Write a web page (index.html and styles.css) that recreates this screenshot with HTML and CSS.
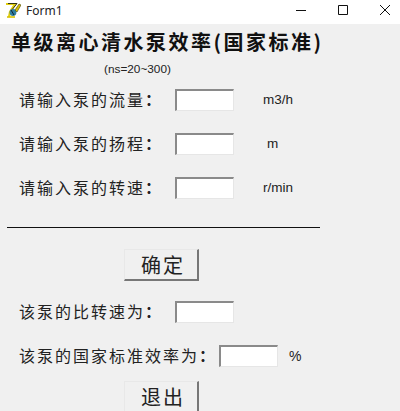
FILE: index.html
```html
<!DOCTYPE html>
<html lang="zh">
<head>
<meta charset="utf-8">
<title>Form1</title>
<link rel="stylesheet" href="styles.css">
</head>
<body>
<div class="window">
  <header class="titlebar">
    <svg class="app-icon" width="15" height="15" viewBox="0 0 15 15">
      <path d="M0 1h9L4 9 3 14" fill="none" stroke="#e3cf10" stroke-width="2.2"/>
      <path d="M2 .5h9L5 8" fill="none" stroke="#33330f" stroke-width="1"/>
      <path d="M1 14h8" stroke="#d9c200" stroke-width="1.6"/>
      <circle cx="7" cy="9.5" r="3.4" fill="#2f7f9f"/>
      <path d="M5 7l3 5" stroke="#123" stroke-width="1"/>
      <path d="M9 7l4-6 2 1-4 7z" fill="#d6c000" stroke="#44400a" stroke-width=".6"/>
    </svg>
    <span class="title-text">Form1</span>
    <div class="controls">
      <svg width="10" height="10" viewBox="0 0 10 10"><path d="M0 5.5h10" stroke="#111" stroke-width="1"/></svg>
      <svg width="10" height="10" viewBox="0 0 10 10"><path d="M.5.5h9v9h-9z" fill="none" stroke="#111" stroke-width="1"/></svg>
      <svg width="10" height="10" viewBox="0 0 10 10"><path d="M0 0l10 10M10 0L0 10" stroke="#111" stroke-width="1"/></svg>
    </div>
  </header>
  <main class="form">
    <h1 class="heading">单级离心清水泵效率(国家标准)</h1>
    <p class="note">(ns=20~300)</p>
    <div class="row row-first">
      <label class="label">请输入泵的流量<span class="colon">：</span></label><span class="field"></span><span class="unit">m3/h</span>
    </div>
    <div class="row">
      <label class="label">请输入泵的扬程<span class="colon">：</span></label><span class="field"></span><span class="unit unit-m">m</span>
    </div>
    <div class="row">
      <label class="label">请输入泵的转速<span class="colon">：</span></label><span class="field"></span><span class="unit">r/min</span>
    </div>
    <hr class="divider">
    <button class="btn btn-ok">确定</button>
    <div class="row row-result">
      <label class="label">该泵的比转速为<span class="colon">：</span></label><span class="field"></span>
    </div>
    <div class="row">
      <label class="label label-wide">该泵的国家标准效率为<span class="colon">：</span></label><span class="field"></span><span class="unit unit-pct">%</span>
    </div>
    <button class="btn btn-exit">退出</button>
  </main>
</div>
</body>
</html>
```
FILE: styles.css
```css
* { box-sizing: border-box; }
html, body { margin: 0; height: 100%; overflow: hidden; }
body { background: #f0f0f0; font-family: "Noto Sans CJK SC", "Liberation Sans", sans-serif; color: #111; }
.window { width: 400px; height: 411px; overflow: hidden; }
.titlebar { height: 24px; background: #fff; display: flex; align-items: center; padding: 0 0 4px 6px; }
.app-icon { flex: none; }
.title-text { font: 12px "Noto Sans", sans-serif; margin-left: 5px; color: #222; }
.controls { margin-left: auto; display: flex; gap: 32px; padding-right: 10px; align-items: center; }
.form { display: flow-root; padding-left: 7px; }
.heading { margin: 5px 0 0 4px; font-size: 20px; line-height: 26px; font-weight: 700; letter-spacing: 2.5px; white-space: nowrap; color: #111; }
.note { margin: 7px 0 0 97px; font: 11.8px/14px "Liberation Sans", sans-serif; color: #222; }
.row { display: flex; align-items: center; height: 22px; margin-top: 22px; padding-left: 12px; }
.row-first { margin-top: 13px; }
.row-result { margin-top: 20px; }
.label { width: 156px; flex: none; padding-bottom: 2px; font-size: 16px; line-height: 22px; letter-spacing: 2px; white-space: nowrap; color: #222; }
.label-wide { width: 200px; }
.colon { font-family: "Noto Sans CJK TC", sans-serif; font-weight: 700; }
.field { flex: none; width: 59px; height: 22px; background: #fff; border: 1px solid #e6e6e6; border-top: 2px solid #8a8a8a; border-left: 2px solid #8a8a8a; }
.unit { margin-left: 29px; font: 13.5px/16px "Liberation Sans", sans-serif; color: #222; }
.unit-m { margin-left: 33px; }
.unit-pct { margin-left: 11px; font-size: 14px; }
.divider { width: 313px; height: 1px; margin: 28px 0 0; border: 0; background: #111; }
.btn { display: block; width: 75px; height: 32px; margin: 0 0 0 117px; padding: 0 0 0 4px; background: #f0f0f0; border: 1px solid #e8e8e8; border-right: 2px solid #777; border-bottom: 2px solid #777; font: 20px/28px "Noto Sans CJK SC", sans-serif; letter-spacing: 2px; color: #222; }
.btn-ok { margin-top: 21px; }
.btn-exit { margin-top: 14px; }
```
